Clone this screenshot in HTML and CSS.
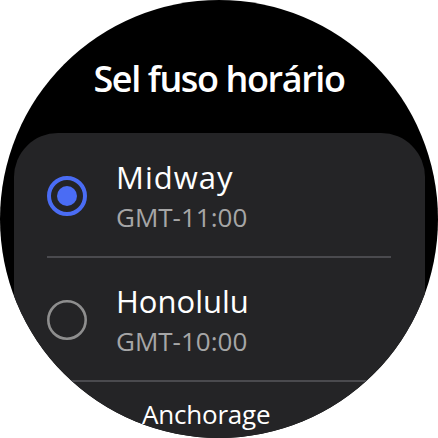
FILE: index.html
```html
<!DOCTYPE html>
<html>
<head>
<meta charset="utf-8">
<link rel="stylesheet" href="styles.css">
</head>
<body>
<div class="watch">
  <h1 class="title">Sel fuso horário</h1>
  <div class="card">
    <div class="row">
      <svg class="radio" width="40" height="40" viewBox="0 0 40 40">
        <circle cx="20" cy="20" r="18" fill="none" stroke="#4a6cf4" stroke-width="4"/>
        <circle cx="20" cy="20" r="10" fill="#4a6cf4"/>
      </svg>
      <div class="texts">
        <div class="name name-wide">Midway</div>
        <div class="offset">GMT-11:00</div>
      </div>
    </div>
    <div class="divider"></div>
    <div class="row">
      <svg class="radio" width="40" height="40" viewBox="0 0 40 40">
        <circle cx="20" cy="20" r="18.7" fill="none" stroke="#8e8e8e" stroke-width="2.6"/>
      </svg>
      <div class="texts">
        <div class="name">Honolulu</div>
        <div class="offset">GMT-10:00</div>
      </div>
    </div>
    <div class="divider"></div>
    <div class="row-small">
      <div class="name-small">Anchorage</div>
    </div>
  </div>
</div>
</body>
</html>
```
FILE: styles.css
```css
html, body {
  margin: 0;
  padding: 0;
  background: #ffffff;
}
.watch {
  width: 438px;
  height: 438px;
  border-radius: 50%;
  background: #000000;
  overflow: hidden;
  display: flex;
  flex-direction: column;
  font-family: "Open Sans", "Liberation Sans", sans-serif;
  color: #ffffff;
}
.title {
  margin: 0;
  padding-top: 57px;
  font-size: 36px;
  line-height: 44px;
  font-weight: 600;
  letter-spacing: -1.4px;
  text-align: center;
}
.card {
  margin-top: 32px;
  margin-left: 14px;
  width: 411px;
  flex: 1;
  background: #242426;
  border-radius: 44px 44px 0 0;
  padding-top: 1px;
}
.row {
  display: flex;
  align-items: center;
  padding: 24px 20px 23px 33px;
}
.radio {
  flex: none;
  display: block;
}
.texts {
  margin-left: 29px;
  display: flex;
  flex-direction: column;
  gap: 5px;
}
.name {
  font-size: 31px;
  line-height: 38px;
}
.name-wide {
  letter-spacing: 1px;
}
.offset {
  font-size: 26px;
  line-height: 32px;
  color: #a6a6a6;
}
.divider {
  height: 2px;
  margin: 0 34px 0 33px;
  background: #4a4a4e;
}
.row-small {
  padding: 16px 0 0 128px;
}
.name-small {
  font-size: 26px;
  line-height: 32px;
  letter-spacing: -0.2px;
}
```
